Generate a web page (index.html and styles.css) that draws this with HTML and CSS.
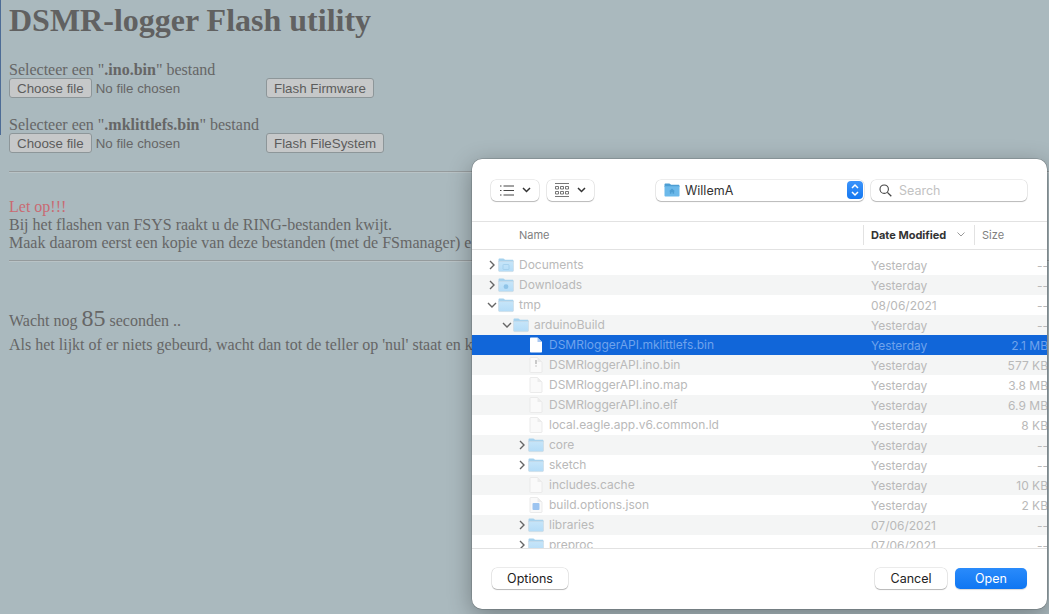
FILE: index.html
```html
<!DOCTYPE html>
<html lang="nl">
<head>
<meta charset="utf-8">
<title>DSMR-logger Flash utility</title>
<link rel="stylesheet" href="styles.css">
</head>
<body>
<svg class="defs" width="0" height="0" aria-hidden="true">
  <defs>
    <linearGradient id="fg" x1="0" y1="0" x2="0" y2="1"><stop offset="0" stop-color="#c6e5f9"/><stop offset="1" stop-color="#b4dcf7"/></linearGradient>
    <symbol id="folder" viewBox="0 0 16 16">
      <path d="M.5 4V2.600C.5 1.900 1 1.500 1.600 1.500h3.600c.5 0 .8.2 1.100.6l.6.7h7.500c.6 0 1.100.5 1.100 1.100V5H.5z" fill="#a5d2ee"/>
      <path d="M.5 4.300h15v9.300c0 .6-.5 1-1.100 1H1.600c-.6 0-1.100-.4-1.100-1z" fill="url(#fg)" stroke="#c9d5dc" stroke-width=".5"/>
    </symbol>
    <symbol id="file" viewBox="0 0 14 16">
      <path d="M1 1.200c0-.4.3-.7.7-.7h6.800L13 5v9.800c0 .4-.3.7-.7.7H1.700c-.4 0-.7-.3-.7-.7z" fill="#fafafa" stroke="#e6e6e6" stroke-width=".8"/>
      <path d="M8.500.5V5H13z" fill="#ececec"/>
    </symbol>
  </defs>
</svg>

<main class="page">
  <h1>DSMR-logger Flash utility</h1>
  <section class="upload">
    <div class="upload-label">Selecteer een "<b>.ino.bin</b>" bestand</div>
    <div class="upload-row">
      <div class="picker"><button class="btn">Choose file</button><span>No file chosen</span></div>
      <button class="btn">Flash Firmware</button>
    </div>
  </section>
  <section class="upload">
    <div class="upload-label">Selecteer een "<b>.mklittlefs.bin</b>" bestand</div>
    <div class="upload-row">
      <div class="picker"><button class="btn">Choose file</button><span>No file chosen</span></div>
      <button class="btn">Flash FileSystem</button>
    </div>
  </section>
  <hr class="rule">
  <section class="warning">
    <div class="alert">Let op!!!</div>
    <div>Bij het flashen van FSYS raakt u de RING-bestanden kwijt.</div>
    <div>Maak daarom eerst een kopie van deze bestanden (met de FSmanager) e</div>
  </section>
  <hr class="rule">
  <section class="wait">
    <div class="count">Wacht nog <span class="num">85</span> seconden ..</div>
    <div class="hint">Als het lijkt of er niets gebeurd, wacht dan tot de teller op 'nul' staat en k</div>
  </section>
</main>

<div class="edge"></div>

<div class="dialog">
  <div class="toolbar">
    <div class="tool tool-list">
      <svg width="14" height="11" viewBox="0 0 14 11"><path d="M0 1h1.500M0 5.500h1.500M0 10h1.500M3.500 1H14M3.500 5.500H14M3.500 10H14" stroke="#444" fill="none"/></svg>
      <svg width="9" height="6" viewBox="0 0 9 6"><path d="M1 1l3.500 3.500L8 1" stroke="#333" stroke-width="1.500" fill="none"/></svg>
    </div>
    <div class="tool tool-grid">
      <svg width="14" height="14" viewBox="0 0 14 14"><path d="M0 .5h14M0 13.500h14" stroke="#777" fill="none"/><path d="M.5 3.500h3v2.500h-3zM5.500 3.500h3v2.500h-3zM10.500 3.500h3v2.500h-3zM.5 8.500h3v2.500h-3zM5.500 8.500h3v2.500h-3zM10.500 8.500h3v2.500h-3z" stroke="#555" stroke-width=".8" fill="none"/></svg>
      <svg width="9" height="6" viewBox="0 0 9 6"><path d="M1 1l3.500 3.500L8 1" stroke="#333" stroke-width="1.500" fill="none"/></svg>
    </div>
    <div class="location">
      <svg class="loc-icon" width="16" height="16" viewBox="0 0 16 16">
        <path d="M.5 4V2.500C.5 1.900 1 1.500 1.600 1.500h3.600c.5 0 .8.2 1.100.6l.6.7h7.500c.6 0 1.100.5 1.100 1.100V5H.5z" fill="#4d9ed3"/>
        <path d="M.5 4.300h15v9.300c0 .6-.5 1-1.100 1H1.600c-.6 0-1.100-.4-1.100-1z" fill="#6cb9ea"/>
        <path d="M8 6.500l-3 2.700h.9v2.600h1.500v-1.500h1.200v1.500h1.500V9.200h.9z" fill="#4d9ed3"/>
      </svg>
      <span class="loc-name">WillemA</span>
      <span class="stepper">
        <svg width="10" height="14" viewBox="0 0 10 14"><path d="M2 5l3-3 3 3M2 9l3 3 3-3" stroke="#fff" stroke-width="1.500" fill="none"/></svg>
      </span>
    </div>
    <div class="search">
      <svg width="13" height="13" viewBox="0 0 13 13"><circle cx="5.200" cy="5.200" r="4.200" stroke="#444" stroke-width="1.100" fill="none"/><path d="M8.400 8.400L12.300 12.300" stroke="#444" stroke-width="1.300"/></svg>
      <span>Search</span>
    </div>
  </div>

  <div class="head">
    <div class="h-name">Name</div>
    <div class="h-date">Date Modified<svg width="8" height="5" viewBox="0 0 8 5"><path d="M.5.500L4 4 7.500.500" stroke="#999" fill="none"/></svg></div>
    <div class="h-size">Size</div>
  </div>

  <div class="list">
    <div class="row d0"><div class="name"><span class="chev"><svg width="7" height="10" viewBox="0 0 7 10"><path d="M1 1l4 4-4 4" stroke="#666" stroke-width="1.400" fill="none"/></svg></span><svg class="ic" width="16" height="16"><use href="#folder"/><rect x="5" y="7.500" width="6" height="5" rx=".6" fill="none" stroke="#9fcdea" stroke-width=".8"/></svg><span>Documents</span></div><div class="date">Yesterday</div><div class="size">--</div></div>
    <div class="row d0"><div class="name"><span class="chev"><svg width="7" height="10" viewBox="0 0 7 10"><path d="M1 1l4 4-4 4" stroke="#666" stroke-width="1.400" fill="none"/></svg></span><svg class="ic" width="16" height="16"><use href="#folder"/><circle cx="8" cy="9.700" r="2.400" fill="#8fc4e8"/></svg><span>Downloads</span></div><div class="date">Yesterday</div><div class="size">--</div></div>
    <div class="row d0"><div class="name"><span class="chev"><svg width="10" height="7" viewBox="0 0 10 7"><path d="M1 1l4 4 4-4" stroke="#666" stroke-width="1.400" fill="none"/></svg></span><svg class="ic" width="16" height="16"><use href="#folder"/></svg><span>tmp</span></div><div class="date">08/06/2021</div><div class="size">--</div></div>
    <div class="row d1"><div class="name"><span class="chev"><svg width="10" height="7" viewBox="0 0 10 7"><path d="M1 1l4 4 4-4" stroke="#666" stroke-width="1.400" fill="none"/></svg></span><svg class="ic" width="16" height="16"><use href="#folder"/></svg><span>arduinoBuild</span></div><div class="date">Yesterday</div><div class="size">--</div></div>
    <div class="row d2 selected"><div class="name"><span class="chev"></span><svg class="ic file-ic" width="14" height="16" viewBox="0 0 14 16"><path d="M1 1.200c0-.4.3-.7.7-.7h6.800L13 5v9.800c0 .4-.3.7-.7.7H1.700c-.4 0-.7-.3-.7-.7z" fill="#fff"/><path d="M8.500.5V5H13z" fill="#a9c8f2"/></svg><span>DSMRloggerAPI.mklittlefs.bin</span></div><div class="date">Yesterday</div><div class="size">2.1 MB</div></div>
    <div class="row d2"><div class="name"><span class="chev"></span><svg class="ic file-ic" width="14" height="16"><use href="#file"/><path d="M7 3v4M7 8.500v1" stroke="#999"/></svg><span>DSMRloggerAPI.ino.bin</span></div><div class="date">Yesterday</div><div class="size">577 KB</div></div>
    <div class="row d2"><div class="name"><span class="chev"></span><svg class="ic file-ic" width="14" height="16"><use href="#file"/></svg><span>DSMRloggerAPI.ino.map</span></div><div class="date">Yesterday</div><div class="size">3.8 MB</div></div>
    <div class="row d2"><div class="name"><span class="chev"></span><svg class="ic file-ic" width="14" height="16"><use href="#file"/></svg><span>DSMRloggerAPI.ino.elf</span></div><div class="date">Yesterday</div><div class="size">6.9 MB</div></div>
    <div class="row d2"><div class="name"><span class="chev"></span><svg class="ic file-ic" width="14" height="16"><use href="#file"/></svg><span>local.eagle.app.v6.common.ld</span></div><div class="date">Yesterday</div><div class="size">8 KB</div></div>
    <div class="row d2"><div class="name"><span class="chev"><svg width="7" height="10" viewBox="0 0 7 10"><path d="M1 1l4 4-4 4" stroke="#666" stroke-width="1.400" fill="none"/></svg></span><svg class="ic" width="16" height="16"><use href="#folder"/></svg><span>core</span></div><div class="date">Yesterday</div><div class="size">--</div></div>
    <div class="row d2"><div class="name"><span class="chev"><svg width="7" height="10" viewBox="0 0 7 10"><path d="M1 1l4 4-4 4" stroke="#666" stroke-width="1.400" fill="none"/></svg></span><svg class="ic" width="16" height="16"><use href="#folder"/></svg><span>sketch</span></div><div class="date">Yesterday</div><div class="size">--</div></div>
    <div class="row d2"><div class="name"><span class="chev"></span><svg class="ic file-ic" width="14" height="16"><use href="#file"/></svg><span>includes.cache</span></div><div class="date">Yesterday</div><div class="size">10 KB</div></div>
    <div class="row d2"><div class="name"><span class="chev"></span><svg class="ic file-ic" width="14" height="16"><use href="#file"/><rect x="3.500" y="6" width="7" height="7" rx="1" fill="#9cc4f0"/></svg><span>build.options.json</span></div><div class="date">Yesterday</div><div class="size">2 KB</div></div>
    <div class="row d2"><div class="name"><span class="chev"><svg width="7" height="10" viewBox="0 0 7 10"><path d="M1 1l4 4-4 4" stroke="#666" stroke-width="1.400" fill="none"/></svg></span><svg class="ic" width="16" height="16"><use href="#folder"/></svg><span>libraries</span></div><div class="date">07/06/2021</div><div class="size">--</div></div>
    <div class="row d2"><div class="name"><span class="chev"><svg width="7" height="10" viewBox="0 0 7 10"><path d="M1 1l4 4-4 4" stroke="#666" stroke-width="1.400" fill="none"/></svg></span><svg class="ic" width="16" height="16"><use href="#folder"/></svg><span>preproc</span></div><div class="date">07/06/2021</div><div class="size">--</div></div>
  </div>

  <div class="footer">
    <button class="mac">Options</button>
    <div class="footer-right">
      <button class="mac">Cancel</button>
      <button class="mac primary">Open</button>
    </div>
  </div>
</div>
</body>
</html>
```
FILE: styles.css
```css
* { box-sizing: border-box; }
html, body { margin: 0; height: 100%; overflow: hidden; }
body {
  background: #aab9be;
  color: #666;
  font: 16px "Liberation Serif", serif;
  white-space: nowrap;
}
.defs { position: absolute; }
.page { padding: 2px 0 0 9px; }
h1 { margin: 0 0 22px; font-size: 32px; line-height: 37px; font-weight: bold; color: #616161; }
.upload { margin-bottom: 18px; }
.upload-label { line-height: 18px; height: 17px; }
.upload-row { display: flex; align-items: center; height: 20px; font: 13.33px "Liberation Sans", sans-serif; color: #666; }
.picker { width: 257px; display: flex; align-items: center; gap: 4px; }
.btn {
  height: 20px; padding: 0 7px;
  font: 13.33px "Liberation Sans", sans-serif; color: #5c5c5c;
  background: #c6c8c9; border: 1px solid #8d9699; border-radius: 3px;
}
.rule { margin: 0; width: 1040px; height: 2px; border: 0; border-top: 1px solid #959b9d; border-bottom: 1px solid #b9c3c6; }
.warning { padding-top: 25px; line-height: 18px; }
.warning + .rule { margin-top: 8px; }
.alert { color: #c96a72; }
.wait { padding-top: 44px; }
.count { line-height: 24px; height: 25px; }
.num { font-size: 24px; }
.hint { margin-top: 5px; line-height: 18px; }
.edge { position: absolute; left: 0; top: 0; width: 1px; height: 135px; background: #4d6c96; }

.dialog {
  position: absolute; left: 472px; top: 159px; width: 575px; height: 450px;
  background: #fff; border-radius: 10px; overflow: hidden;
  box-shadow: 0 0 0 .5px rgba(0,0,0,.25), 0 6px 24px rgba(0,0,0,.32);
  font: 12px Inter, "Liberation Sans", sans-serif; color: #2a2a2a;
  font-feature-settings: "calt" 0;
  display: flex; flex-direction: column;
}
.toolbar { height: 63px; flex: none; display: flex; align-items: center; padding: 0 20px 0 19px; border-bottom: 1px solid #e2e2e2; }
.tool, .location, .search {
  height: 21px; background: #fff; border-radius: 5px;
  box-shadow: 0 0 0 .5px rgba(0,0,0,.14), 0 1px 1px rgba(0,0,0,.22);
  display: flex; align-items: center;
}
.tool { justify-content: center; gap: 8px; }
.tool-list { width: 48px; }
.tool-grid { width: 47px; margin-left: 8px; }
.location { width: 208px; margin-left: 62px; padding: 0 1px 0 8px; gap: 5px; }
.loc-icon { flex: none; }
.loc-name { flex: 1; font-size: 12.5px; color: #333; }
.stepper { width: 16px; height: 18px; border-radius: 4px; background: linear-gradient(#3c94fb, #1477f0); display: flex; align-items: center; justify-content: center; }
.search { width: 156px; margin-left: 7px; padding-left: 8px; gap: 7px; color: #c2c2c2; font-size: 12.5px; }

.head { height: 28px; flex: none; display: flex; align-items: center; padding-bottom: 2px; border-bottom: 1px solid #e2e2e2; font-size: 11px; color: #808080; }
.h-name { width: 391px; padding-left: 47px; }
.h-date { width: 111px; height: 20px; padding: 0 9px 0 7px; border-left: 1px solid #e2e2e2; display: flex; align-items: center; justify-content: space-between; font-weight: 700; color: #333; }
.h-size { padding-left: 7px; height: 20px; line-height: 20px; border-left: 1px solid #e2e2e2; }

.list { flex: 1; min-height: 0; overflow: hidden; padding-top: 5px; border-bottom: 1px solid #e2e2e2; color: #b9b9b9; }
.row { height: 20px; display: flex; align-items: center; }
.row:nth-child(even) { background: #f4f5f5; }
.row.selected { background: #1166d9; color: #6fa3ec; }
.name { width: 399px; display: flex; align-items: center; line-height: 18px; }
.name span:last-child { margin-top: -1px; }
.d0 .name { padding-left: 14px; }
.d1 .name { padding-left: 29px; }
.d2 .name { padding-left: 44px; }
.chev { width: 12px; flex: none; display: flex; align-items: center; justify-content: center; }
.ic { flex: none; margin-right: 5px; }
.file-ic { margin-left: 1px; margin-right: 6px; }
.date { width: 100px; }
.size { flex: 1; text-align: right; margin-right: -1px; }

.footer { flex: none; height: 60px; display: flex; align-items: center; justify-content: space-between; padding: 0 20px 1px; }
.footer-right { display: flex; gap: 8px; }
.mac {
  height: 21px; width: 76px; border: 0; border-radius: 5px; background: #fff;
  font: 12.5px Inter, "Liberation Sans", sans-serif; color: #222;
  box-shadow: 0 0 0 .5px rgba(0,0,0,.16), 0 1px 1px rgba(0,0,0,.22);
}
.footer-right .mac { width: 72px; }
.mac.primary { background: linear-gradient(#2a8bfb, #0f76f2); color: #fff; box-shadow: 0 1px 1px rgba(0,0,0,.15); }
```
